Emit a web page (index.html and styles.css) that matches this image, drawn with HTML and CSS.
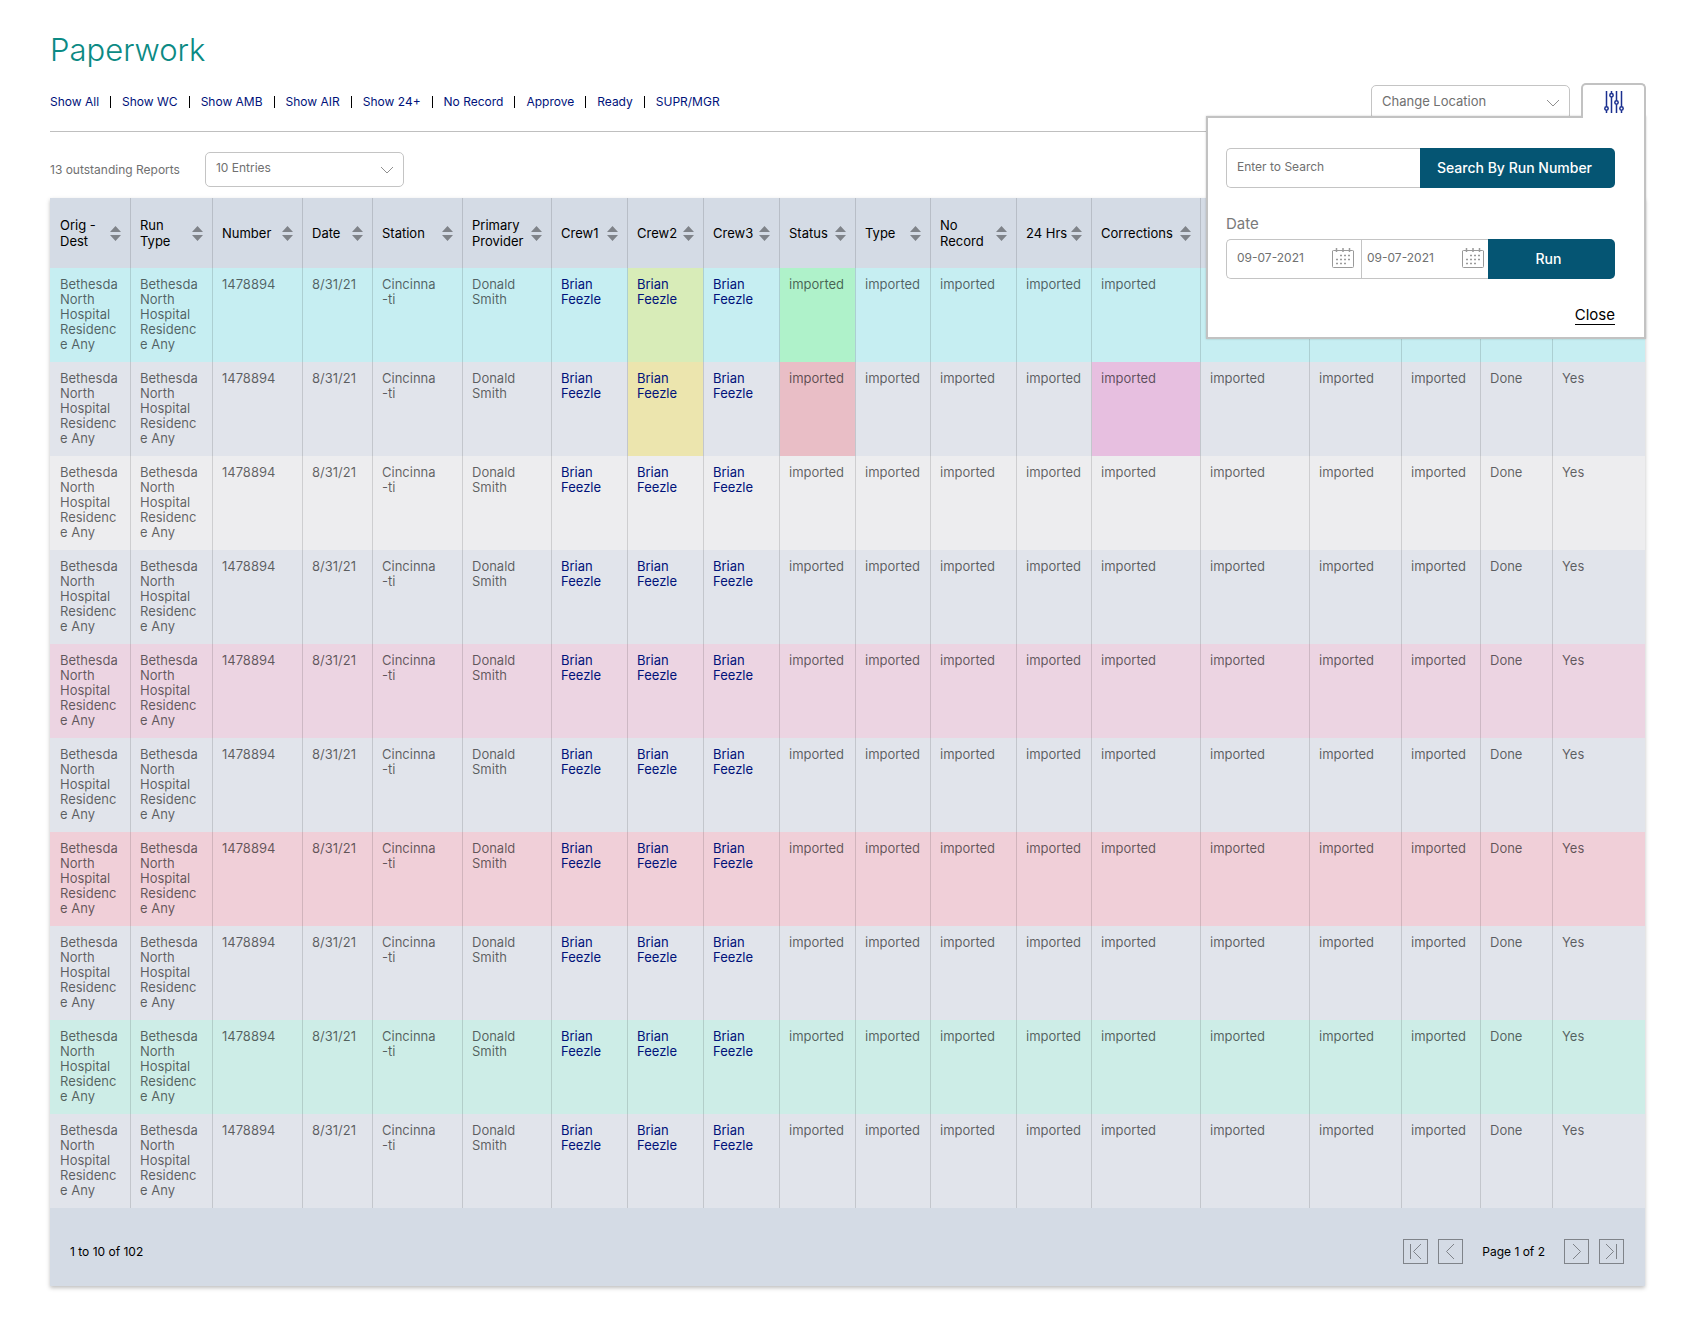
FILE: index.html
```html
<!DOCTYPE html>
<html lang="en">
<head>
<meta charset="utf-8">
<meta name="viewport" content="width=device-width, initial-scale=1">
<title>Paperwork</title>
<link rel="stylesheet" href="styles.css">
</head>
<body>
<svg class="sprite" aria-hidden="true">
  <symbol id="chevron" viewBox="0 0 14 8"><path d="M1 1l6 6 6-6" fill="none" stroke="currentColor"/></symbol>
  <symbol id="calendar" viewBox="0 0 22 20">
    <path d="M.5 3v15.500q0 1 1 1h19q1 0 1-1V3q0-.5-1-.5h-19q-1 0-1 .5z" fill="none" stroke="currentColor"/>
    <path d="M4.500 0v4M11 0v4M17.500 0v4" stroke="currentColor" stroke-width="1.500"/>
    <path d="M8 7.500h2M12 7.500h2M16 7.500h2M4 11.500h2M8 11.500h2M12 11.500h2M16 11.500h2M4 15.500h2M8 15.500h2M12 15.500h2" stroke="currentColor" stroke-width="1.500"/>
  </symbol>
  <symbol id="sort" viewBox="0 0 11 15"><path d="M0 6l5.500-6L11 6zM0 9h11l-5.500 6z" fill="currentColor"/></symbol>
</svg>

<main class="page">
  <h1 class="title">Paperwork</h1>

  <div class="bar">
    <nav class="views">
      <a href="#all">Show All</a>
      <a href="#wc">Show WC</a>
      <a href="#amb">Show AMB</a>
      <a href="#air">Show AIR</a>
      <a href="#24">Show 24+</a>
      <a href="#norecord">No Record</a>
      <a href="#approve">Approve</a>
      <a href="#ready">Ready</a>
      <a href="#supr">SUPR/MGR</a>
    </nav>
    <div class="tools">
      <div class="select select-location">
        <select aria-label="Change Location"><option>Change Location</option></select>
        <svg class="chevron" width="14" height="8"><use href="#chevron"/></svg>
      </div>
      <div class="filter">
        <button class="filter-tab" type="button" aria-label="Date">
          <svg width="20" height="22" viewBox="0 0 20 22" fill="none" stroke="#1a2f8f" stroke-width="1.500">
            <path d="M2.500 0v15.500M2.500 19.500v2.500M7.500 0v2.500M7.500 6v16M12.500 0v9.500M12.500 13.500v8.500M17.500 0v15.500M17.500 19.500v2.500"/>
            <circle cx="2.500" cy="17.500" r="1.700"/><circle cx="7.500" cy="4.300" r="1.700"/><circle cx="12.500" cy="11.500" r="1.700"/><circle cx="17.500" cy="17.500" r="1.700"/>
          </svg>
        </button>
        <form class="popup">
          <div class="group">
            <input class="field field-search" type="text" placeholder="Enter to Search" aria-label="Enter to Search">
            <button class="action action-search" type="button">Search By Run Number</button>
          </div>
          <label class="label" for="from">Date</label>
          <div class="group">
            <div class="field field-date">
              <input id="from" type="text" value="09-07-2021">
              <svg width="22" height="20"><use href="#calendar"/></svg>
            </div>
            <div class="field field-date field-to">
              <input type="text" value="09-07-2021" aria-label="Date">
              <svg width="22" height="20"><use href="#calendar"/></svg>
            </div>
            <button class="action" type="button">Run</button>
          </div>
          <a class="close" href="#close">Close</a>
        </form>
      </div>
    </div>
  </div>

  <div class="summary">
    <label for="entries">13 outstanding Reports</label>
    <div class="select">
      <select id="entries"><option>10 Entries</option></select>
      <svg class="chevron" width="14" height="8"><use href="#chevron"/></svg>
    </div>
  </div>

  <section class="sheet">
    <table class="reports">
      <colgroup id="cols"></colgroup>
      <thead><tr id="head"></tr></thead>
      <tbody id="rows"></tbody>
    </table>
    <footer class="pager">
      <span>1 to 10 of 102</span>
      <div class="pages">
        <button type="button" aria-label="First page"><svg width="23" height="23" viewBox="0 0 23 23"><path d="M6.500 4v15M17 4l-7.500 7.500L17 19"/></svg></button>
        <button type="button" aria-label="Previous page"><svg width="23" height="23" viewBox="0 0 23 23"><path d="M15 4l-7.500 7.500L15 19"/></svg></button>
        <span class="current">Page 1 of 2</span>
        <button type="button" aria-label="Next page"><svg width="23" height="23" viewBox="0 0 23 23"><path d="M8 4l7.500 7.500L8 19"/></svg></button>
        <button type="button" aria-label="Last page"><svg width="23" height="23" viewBox="0 0 23 23"><path d="M16.500 4v15M6 4l7.500 7.500L6 19"/></svg></button>
      </div>
    </footer>
  </section>
</main>
<script src="app.js"></script>
</body>
</html>
```
FILE: app.js
```js
const place = 'Bethesda<br>North<br>Hospital<br>Residenc<br>e Any';
const crew = '<a href="#crew">Brian<br>Feezle</a>';

// [heading, width, cell content]
const columns = [
  ['Orig -<br>Dest', 81, place],
  ['Run<br>Type', 82, place],
  ['Number', 90, '1478894'],
  ['Date', 70, '8/31/21'],
  ['Station', 90, 'Cincinna<br>-ti'],
  ['Primary<br>Provider', 89, 'Donald<br>Smith'],
  ['Crew1', 76, crew],
  ['Crew2', 76, crew],
  ['Crew3', 76, crew],
  ['Status', 76, 'imported'],
  ['Type', 75, 'imported'],
  ['No<br>Record', 86, 'imported'],
  ['24 Hrs', 75, 'imported'],
  ['Corrections', 109, 'imported'],
  ['', 109, 'imported'],
  ['', 92, 'imported'],
  ['', 79, 'imported'],
  ['', 72, 'Done'],
  ['', 92, 'Yes']
];

const rowTones = ['cyan', '', 'plain', '', 'mauve', '', 'rose', '', 'mint', ''];

// Highlighted cells, keyed by "row-column"
const cellTones = {
  '0-7': 'lime', '0-9': 'green',
  '1-7': 'yellow', '1-9': 'red', '1-13': 'orchid'
};

const sortIcon = '<svg width="11" height="15"><use href="#sort"/></svg>';

document.getElementById('cols').innerHTML =
  columns.map(c => `<col style="width:${c[1]}px">`).join('');

document.getElementById('head').innerHTML = columns.map(c => c[0]
  ? `<th scope="col"><div class="heading"><span>${c[0]}</span>${sortIcon}</div></th>`
  : '<td></td>').join('');

document.getElementById('rows').innerHTML = rowTones.map((tone, r) =>
  `<tr class="${tone}">` + columns.map((c, i) =>
    `<td class="${cellTones[r + '-' + i] || ''}">${c[2]}</td>`).join('') + '</tr>'
).join('');
```
FILE: styles.css
```css
* { box-sizing: border-box; }

body {
  margin: 0;
  background: #fff;
  color: #000;
  font: 13px/16px Inter, "Open Sans", sans-serif;
}

button, input, select { font: inherit; }
a { color: #00127a; text-decoration: none; }
svg { display: block; flex: none; }
.sprite { display: none; }

.page { padding: 30px 55px 53px 50px; }

.title {
  margin: 0 0 13px;
  color: #0b8a84;
  font-size: 31px;
  font-weight: 300;
  line-height: 40px;
}

/* View links, location and filter */
.bar {
  display: flex;
  justify-content: space-between;
  height: 49px;
  border-bottom: 1px solid #bfbfbf;
}

.views {
  display: flex;
  align-items: center;
  height: 38px;
  font-size: 12px;
}
.views a + a::before {
  content: "";
  display: inline-block;
  width: 1px;
  height: 12px;
  margin: 0 11px;
  background: #000;
  vertical-align: -2px;
}

.tools {
  display: flex;
  gap: 11px;
  margin-right: -1px;
}

.select {
  display: grid;
  align-items: center;
  width: 199px;
  height: 35px;
  font-size: 12px;
}
.select > * { grid-area: 1 / 1; }
.select select {
  width: 100%;
  height: 100%;
  padding: 0 10px 4px;
  border: 1px solid #c4c4c4;
  border-radius: 5px;
  background: #fff;
  color: #707070;
  appearance: none;
}
.select-location { margin-top: 2px; font-size: 13px; }
.chevron {
  justify-self: end;
  margin-right: 10px;
  color: #8f8f8f;
  pointer-events: none;
}

.filter { position: relative; }
.filter-tab {
  position: relative;
  z-index: 2;
  display: flex;
  justify-content: center;
  width: 65px;
  height: 35px;
  padding: 6px 0 0;
  border: 2px solid #c2c2c2;
  border-bottom: 0;
  border-radius: 5px 5px 0 0;
  background: #fff;
}

.popup {
  position: absolute;
  z-index: 1;
  top: 33px;
  right: 0;
  width: 440px;
  padding: 30px 29px 12px 18px;
  border: 2px solid #c2c2c2;
  background: #fff;
  box-shadow: 0 0 2px rgba(0, 0, 0, .2);
}
.group { display: flex; height: 40px; }
.field {
  border: 1px solid #c4c4c4;
  border-right: 0;
  background: #fff;
  color: #707070;
  font-size: 12px;
}
.field-search {
  flex: 1;
  min-width: 0;
  padding: 0 10px 2px;
  border-radius: 5px 0 0 5px;
}
.field-search::placeholder { color: #707070; opacity: 1; }
.field-date {
  display: flex;
  align-items: center;
  justify-content: space-between;
  width: 135px;
  padding: 0 7px 2px 10px;
  border-radius: 5px 0 0 5px;
}
.field-date input {
  width: 80px;
  padding: 0;
  border: 0;
  background: none;
  color: inherit;
}
.field-date svg { color: #9a9a9a; }
.field-to {
  width: 127px;
  padding: 0 4px 2px 5px;
  border-radius: 0;
}
.action {
  flex: 1;
  padding: 0 6px 0 0;
  border: 0;
  border-radius: 0 5px 5px 0;
  background: #055573;
  color: #fff;
  font-size: 14px;
  font-weight: 500;
}
.action-search { flex: none; width: 195px; }
.label {
  display: block;
  margin: 26px 0 5px;
  color: #7a7a7a;
  font-size: 15px;
  line-height: 20px;
}
.close {
  display: block;
  width: fit-content;
  margin: 27px 0 0 auto;
  border-bottom: 1px solid #000;
  color: #000;
  font-size: 15px;
  line-height: 18px;
}

/* Report count and page size */
.summary {
  display: flex;
  align-items: center;
  gap: 25px;
  padding: 20px 0 11px;
  color: #707070;
  font-size: 12px;
}

/* Report table */
.sheet { box-shadow: 0 2px 4px rgba(0, 0, 0, .25); }
.reports {
  width: 100%;
  border-collapse: separate;
  border-spacing: 0;
  table-layout: fixed;
  background: #e1e4eb;
}
.reports td, .reports th {
  padding: 0 9px;
  border-right: 1px solid rgba(0, 0, 0, .13);
  background-clip: padding-box;
  text-align: left;
}
.reports tr > :first-child { padding-left: 10px; }
.reports tr > :last-child { border-right: 0; }
.reports thead tr { height: 70px; background: #d4dbe5; }
.reports th { font-weight: 400; }
.heading {
  display: flex;
  align-items: center;
  justify-content: space-between;
}
.heading svg { color: #7f8389; }
.reports tbody td {
  height: 94px;
  padding-top: 9px;
  color: rgba(0, 0, 0, .6);
  line-height: 15px;
  vertical-align: top;
}

.cyan { background: #c6eef2; }
.plain { background: #ededef; }
.mauve { background: #ecd4e2; }
.rose { background: #f0cfd8; }
.mint { background: #cdede7; }
.lime { background: #d8ecb8; }
.green { background: #aff2ca; }
.yellow { background: #ece5ae; }
.red { background: #e9bec6; }
.orchid { background: #e7bfe0; }

.pager {
  display: flex;
  align-items: center;
  justify-content: space-between;
  padding: 31px 21px 22px 20px;
  background: #d4dbe5;
  font-size: 12px;
}
.pages { display: flex; align-items: center; gap: 10px; }
.current { margin: 0 9px; }
.pages button {
  padding: 0;
  border: 1px solid #7f8389;
  background: none;
}
.pages path { fill: none; stroke: #7f8389; }
```
